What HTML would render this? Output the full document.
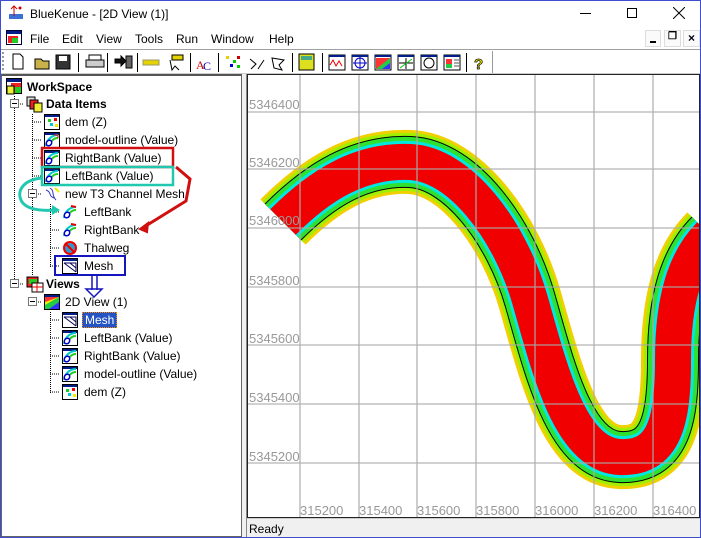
<!DOCTYPE html>
<html><head><style>
*{margin:0;padding:0;box-sizing:border-box}
body{width:701px;height:538px;overflow:hidden;background:#fff;font-family:"Liberation Sans",sans-serif;font-size:12px;position:relative}
.a{position:absolute}
.t{position:absolute;font-size:12px;white-space:nowrap;line-height:14px}
</style></head><body>
<div class="a" style="left:0;top:0;width:701px;height:538px;border:1px solid #3d4fd0"></div>
<div class="a" style="left:8px;top:4px;width:16px;height:16px">
<svg width="16" height="16"><rect x="1" y="10" width="14" height="5" fill="#3a6fd8"/><path d="M6 2v10M3 5l3-3 3 3" stroke="#c00" fill="none"/><circle cx="12" cy="4" r="1.5" fill="#c00"/></svg></div>
<div class="t" style="left:30px;top:7px;font-size:12px">BlueKenue - [2D View (1)]</div>
<div class="a" style="left:580px;top:13px;width:11px;height:1px;background:#000"></div>
<div class="a" style="left:627px;top:8px;width:10px;height:10px;border:1px solid #000"></div>
<svg class="a" style="left:673px;top:7px" width="12" height="12"><path d="M0 0L12 12M12 0L0 12" stroke="#000"/></svg>
<svg class="a" style="left:6px;top:30px" width="16" height="15"><rect x="0.5" y="0.5" width="15" height="14" fill="#fff" stroke="#003"/><rect x="1" y="1" width="14" height="3" fill="#001d8a"/><rect x="2" y="6" width="10" height="7" fill="#e22"/><rect x="6" y="8" width="6" height="5" fill="#2c2"/></svg>
<div class="t" style="left:30px;top:32px">File</div>
<div class="t" style="left:62px;top:32px">Edit</div>
<div class="t" style="left:96px;top:32px">View</div>
<div class="t" style="left:135px;top:32px">Tools</div>
<div class="t" style="left:176px;top:32px">Run</div>
<div class="t" style="left:211px;top:32px">Window</div>
<div class="t" style="left:269px;top:32px">Help</div>
<div class="a" style="left:645px;top:30px;width:16px;height:17px;border:1px solid #ddd;background:#fafafa"></div><div class="a" style="left:650px;top:41px;width:6px;height:2px;background:#000"></div>
<div class="a" style="left:664px;top:30px;width:17px;height:17px;border:1px solid #ddd;background:#fafafa;font-size:10px;text-align:center;font-weight:bold">&#x2750;</div>
<div class="a" style="left:683px;top:30px;width:17px;height:17px;border:1px solid #ddd;background:#fafafa;font-size:12px;text-align:center;font-weight:bold;color:#001">×</div>
<div class="a" style="left:1px;top:49px;width:699px;height:1px;background:#a0a0a0"></div>
<div class="a" style="left:2px;top:52px;width:2px;height:18px;border-left:2px dotted #999"></div>
<svg class="a" style="left:0;top:50px" width="500" height="24">
<g stroke="#000" fill="none">
<path d="M13 4h7l3 3v12h-10z" fill="#fff"/>
<path d="M35 9h6l2 2h6v8h-14z" fill="#c9b24a"/>
<rect x="56" y="5" width="14" height="14" fill="#333"/><rect x="59" y="6" width="8" height="5" fill="#fff" stroke="none"/>
<path d="M86 10h18v7h-18z" fill="#ccc"/><path d="M89 10v-5h12v5"/>
<path d="M115 9h6v-3l5 5-5 5v-3h-6z" fill="#111"/><rect x="126" y="6" width="6" height="12" fill="#666"/>
<rect x="143" y="10" width="16" height="5" fill="#e6d200" stroke="#996"/>
<path d="M172 5h11v5h-11z" fill="#e6d200"/><path d="M170 10l2 10 3-4 4 4" />
</g>
<text x="196" y="19" font-family="Liberation Serif" font-size="12" fill="#c00">A</text><text x="203" y="20" font-family="Liberation Serif" font-size="12" fill="#00c">C</text>
<rect x="226" y="6" width="3" height="3" fill="#e6d200"/><rect x="233" y="10" width="3" height="3" fill="#0c0"/><rect x="237" y="6" width="3" height="3" fill="#c00"/><rect x="230" y="14" width="3" height="3" fill="#00c"/><rect x="237" y="15" width="3" height="3" fill="#0c0"/>
<path d="M250 9l6 5-5 5M258 19l6-9" stroke="#000" fill="none"/>
<path d="M272 8l12 2-5 5 3 5-8-2z" stroke="#000" fill="none"/>
<rect x="299" y="4" width="15" height="16" fill="#dde020" stroke="#000"/><rect x="301" y="6" width="11" height="4" fill="#4a8" />
<g stroke="#000" fill="#fff"><rect x="329" y="5" width="16" height="15"/><rect x="352" y="5" width="16" height="15"/><rect x="375" y="5" width="16" height="15"/><rect x="398" y="5" width="16" height="15"/><rect x="421" y="5" width="16" height="15"/><rect x="444" y="5" width="16" height="15"/></g>
<g fill="#001d8a"><rect x="329" y="5" width="16" height="2"/><rect x="352" y="5" width="16" height="2"/><rect x="375" y="5" width="16" height="2"/><rect x="398" y="5" width="16" height="2"/><rect x="421" y="5" width="16" height="2"/><rect x="444" y="5" width="16" height="2"/></g>
<path d="M330 15l3-5 3 6 3-5 3 5" stroke="#e00" fill="none"/>
<circle cx="360" cy="13" r="5" stroke="#00c" fill="none"/><path d="M353 13h14M360 7v12" stroke="#00c"/>
<rect x="376" y="8" width="14" height="11" fill="#f33"/><path d="M376 19l14-11v11z" fill="#2c4"/><path d="M382 19l8-6v6z" fill="#33f"/>
<path d="M399 13h14M406 8v11" stroke="#000"/><path d="M400 18l12-9" stroke="#0c0"/>
<circle cx="429" cy="13" r="5" stroke="#000" fill="none"/>
<rect x="446" y="9" width="6" height="5" fill="#f33"/><rect x="446" y="14" width="6" height="4" fill="#2c4"/><path d="M454 10h5M454 13h5M454 16h5" stroke="#555"/>
<text x="474" y="19" font-size="15" font-weight="bold" fill="#ee0" stroke="#000" stroke-width="0.7">?</text>
<g fill="#000"><rect x="78" y="3" width="1" height="19"/><rect x="107" y="3" width="1" height="19"/><rect x="137" y="3" width="1" height="19"/><rect x="190" y="3" width="1" height="19"/><rect x="218" y="3" width="1" height="19"/><rect x="292" y="3" width="1" height="19"/><rect x="322" y="3" width="1" height="19"/><rect x="466" y="3" width="1" height="19"/></g>
<rect x="492" y="1" width="1" height="23" fill="#999"/>
</svg>
<div class="a" style="left:1px;top:73px;width:699px;height:1px;background:#ccc"></div>
<div class="a" style="left:1px;top:74px;width:241px;height:463px;border:1px solid #666;border-top:2px solid #555;background:#fff"></div>
<div class="a" style="left:242px;top:74px;width:5px;height:463px;background:#f0f0f0;border-right:1px solid #888"></div>
<svg class="a" style="left:0;top:74px" width="242" height="340">
<g stroke="#000" stroke-dasharray="1,1" fill="none">
<path d="M14.5 22v188"/>
<path d="M14 30h10M14 210h10"/>
<path d="M32.5 40v162"/>
<path d="M32 48h10M32 66h10M32 84h10M32 102h10M32 120h10M32 228h10"/>
<path d="M50.5 130v64M50 138h10M50 156h10M50 174h10M50 192h10"/>
<path d="M50.5 238v82M50 246h10M50 264h10M50 282h10M50 300h10M50 318h10"/>
</g>
<g fill="#fff" stroke="#777"><rect x="10.5" y="25.5" width="8" height="8"/><rect x="28.5" y="115.5" width="8" height="8"/><rect x="10.5" y="205.5" width="8" height="8"/><rect x="28.5" y="223.5" width="8" height="8"/></g>
<g stroke="#000"><path d="M12 29.5h5M30 119.5h5M12 209.5h5M30 227.5h5"/></g>
</svg>
<svg class="a" style="left:6px;top:78px" width="18" height="18"><rect x="0.5" y="0.5" width="15" height="15" fill="#fff" stroke="#000"/><rect x="1" y="1" width="14" height="3" fill="#001d8a"/><rect x="5" y="5" width="10" height="10" fill="#e22"/><rect x="9" y="9" width="6" height="6" fill="#2c2"/><rect x="1" y="8" width="7" height="8" fill="#ee3" stroke="#000"/></svg>
<div class="t" style="left:27px;top:80px;font-weight:bold">WorkSpace</div>
<svg class="a" style="left:26px;top:96px" width="18" height="18"><rect x="1" y="1" width="8" height="9" fill="#ddd" stroke="#000"/><rect x="4" y="4" width="8" height="9" fill="#e22" stroke="#000"/><rect x="8" y="7" width="8" height="9" fill="#ee3" stroke="#000"/></svg>
<div class="t" style="left:46px;top:97px;font-weight:bold">Data Items</div>
<svg class="a" style="left:44px;top:114px" width="16" height="16"><rect x="0.5" y="0.5" width="15" height="15" fill="#fff" stroke="#000"/><rect x="1" y="1" width="14" height="2" fill="#001d8a"/><rect x="4" y="5" width="3" height="3" fill="#2c2"/><rect x="10" y="4" width="3" height="3" fill="#e00"/><rect x="6" y="9" width="3" height="3" fill="#0cc"/><rect x="11" y="10" width="3" height="3" fill="#ee0"/></svg>
<div class="t" style="left:65px;top:115px">dem (Z)</div>
<svg class="a" style="left:44px;top:132px" width="16" height="16"><rect x="0.5" y="0.5" width="15" height="15" fill="#fff" stroke="#000"/><rect x="1" y="1" width="14" height="2" fill="#001d8a"/><path d="M2 14 A12 12 0 0 1 14 3" stroke="#0cc" stroke-width="2" fill="none"/><path d="M6 14A8 8 0 0 1 14 6" stroke="#2c2" stroke-width="2" fill="none"/><path d="M10 3h4v3" stroke="#e00" fill="none"/><ellipse cx="5" cy="11" rx="2.5" ry="3" transform="rotate(40 5 11)" fill="#fff" stroke="#00c" stroke-width="1.5"/></svg>
<div class="t" style="left:65px;top:133px">model-outline (Value)</div>
<svg class="a" style="left:44px;top:150px" width="16" height="16"><rect x="0.5" y="0.5" width="15" height="15" fill="#fff" stroke="#000"/><rect x="1" y="1" width="14" height="2" fill="#001d8a"/><path d="M2 14 A12 12 0 0 1 14 3" stroke="#0cc" stroke-width="2" fill="none"/><path d="M6 14A8 8 0 0 1 14 6" stroke="#2c2" stroke-width="2" fill="none"/><ellipse cx="5" cy="11" rx="2.5" ry="3" transform="rotate(40 5 11)" fill="#fff" stroke="#00c" stroke-width="1.5"/></svg>
<div class="t" style="left:65px;top:151px">RightBank (Value)</div>
<svg class="a" style="left:44px;top:168px" width="16" height="16"><rect x="0.5" y="0.5" width="15" height="15" fill="#fff" stroke="#000"/><rect x="1" y="1" width="14" height="2" fill="#001d8a"/><path d="M2 14 A12 12 0 0 1 14 3" stroke="#0cc" stroke-width="2" fill="none"/><path d="M6 14A8 8 0 0 1 14 6" stroke="#2c2" stroke-width="2" fill="none"/><ellipse cx="5" cy="11" rx="2.5" ry="3" transform="rotate(40 5 11)" fill="#fff" stroke="#00c" stroke-width="1.5"/></svg>
<div class="t" style="left:65px;top:169px">LeftBank (Value)</div>
<svg class="a" style="left:44px;top:186px" width="16" height="16"><path d="M2 4c6 2 2 6 8 8M6 2c5 3 1 7 6 12" stroke="#33c" fill="none"/><path d="M11 2l4 4" stroke="#ee0" stroke-width="2"/></svg>
<div class="t" style="left:65px;top:187px">new T3 Channel Mesh</div>
<svg class="a" style="left:62px;top:204px" width="16" height="16"><path d="M2 14 A12 12 0 0 1 14 3" stroke="#0cc" stroke-width="2" fill="none"/><path d="M6 14A8 8 0 0 1 14 6" stroke="#2c2" stroke-width="2" fill="none"/><path d="M9 2l5 1" stroke="#e00" stroke-width="2"/><ellipse cx="5" cy="11" rx="2.5" ry="3" transform="rotate(40 5 11)" fill="#fff" stroke="#00c" stroke-width="1.5"/></svg>
<div class="t" style="left:84px;top:205px">LeftBank</div>
<svg class="a" style="left:62px;top:222px" width="16" height="16"><path d="M2 14 A12 12 0 0 1 14 3" stroke="#0cc" stroke-width="2" fill="none"/><path d="M6 14A8 8 0 0 1 14 6" stroke="#2c2" stroke-width="2" fill="none"/><path d="M9 2l5 1" stroke="#e00" stroke-width="2"/><ellipse cx="5" cy="11" rx="2.5" ry="3" transform="rotate(40 5 11)" fill="#fff" stroke="#00c" stroke-width="1.5"/></svg>
<div class="t" style="left:84px;top:223px">RightBank</div>
<svg class="a" style="left:62px;top:240px" width="16" height="16"><circle cx="8" cy="8" r="6" stroke="#e00" stroke-width="2" fill="#39c"/><path d="M3 3l10 10" stroke="#e00" stroke-width="2"/></svg>
<div class="t" style="left:84px;top:241px">Thalweg</div>
<svg class="a" style="left:62px;top:258px" width="16" height="16"><rect x="0.5" y="0.5" width="15" height="15" fill="#fff" stroke="#000"/><rect x="1" y="1" width="14" height="2" fill="#001d8a"/><path d="M2 5h12v9M2 5l12 9M8 5l6 5" stroke="#005" fill="none"/></svg>
<div class="t" style="left:84px;top:259px">Mesh</div>
<svg class="a" style="left:26px;top:276px" width="18" height="18"><rect x="1" y="1" width="11" height="10" fill="#e22" stroke="#000"/><rect x="3" y="3" width="8" height="5" fill="#2c2"/><rect x="6" y="7" width="11" height="9" fill="#fff" stroke="#000"/><path d="M6 11h11M11 7v9" stroke="#e00"/></svg>
<div class="t" style="left:46px;top:277px;font-weight:bold">Views</div>
<svg class="a" style="left:44px;top:294px" width="16" height="16"><rect x="0.5" y="0.5" width="15" height="15" fill="#fff" stroke="#000"/><rect x="1" y="1" width="14" height="2" fill="#001d8a"/><rect x="1" y="3" width="14" height="12" fill="#f33"/><path d="M1 15V8l14-5v12z" fill="#ee0"/><path d="M1 15v-4l14-8v12z" fill="#2c4"/><path d="M5 15l10-7v7z" fill="#33f"/></svg>
<div class="t" style="left:65px;top:295px">2D View (1)</div>
<svg class="a" style="left:62px;top:312px" width="16" height="16"><rect x="0.5" y="0.5" width="15" height="15" fill="#fff" stroke="#000"/><rect x="1" y="1" width="14" height="2" fill="#001d8a"/><path d="M2 5h12v9M2 5l12 9M8 5l6 5" stroke="#005" fill="none"/></svg>
<div class="t" style="left:82px;top:312px;background:#2453c4;color:#fff;padding:0 2px;border:1px dotted #f80;height:16px;line-height:14px">Mesh</div>
<svg class="a" style="left:62px;top:330px" width="16" height="16"><rect x="0.5" y="0.5" width="15" height="15" fill="#fff" stroke="#000"/><rect x="1" y="1" width="14" height="2" fill="#001d8a"/><path d="M2 14 A12 12 0 0 1 14 3" stroke="#0cc" stroke-width="2" fill="none"/><path d="M6 14A8 8 0 0 1 14 6" stroke="#2c2" stroke-width="2" fill="none"/><ellipse cx="5" cy="11" rx="2.5" ry="3" transform="rotate(40 5 11)" fill="#fff" stroke="#00c" stroke-width="1.5"/></svg>
<div class="t" style="left:84px;top:331px">LeftBank (Value)</div>
<svg class="a" style="left:62px;top:348px" width="16" height="16"><rect x="0.5" y="0.5" width="15" height="15" fill="#fff" stroke="#000"/><rect x="1" y="1" width="14" height="2" fill="#001d8a"/><path d="M2 14 A12 12 0 0 1 14 3" stroke="#0cc" stroke-width="2" fill="none"/><path d="M6 14A8 8 0 0 1 14 6" stroke="#2c2" stroke-width="2" fill="none"/><ellipse cx="5" cy="11" rx="2.5" ry="3" transform="rotate(40 5 11)" fill="#fff" stroke="#00c" stroke-width="1.5"/></svg>
<div class="t" style="left:84px;top:349px">RightBank (Value)</div>
<svg class="a" style="left:62px;top:366px" width="16" height="16"><rect x="0.5" y="0.5" width="15" height="15" fill="#fff" stroke="#000"/><rect x="1" y="1" width="14" height="2" fill="#001d8a"/><path d="M2 14 A12 12 0 0 1 14 3" stroke="#0cc" stroke-width="2" fill="none"/><path d="M6 14A8 8 0 0 1 14 6" stroke="#2c2" stroke-width="2" fill="none"/><ellipse cx="5" cy="11" rx="2.5" ry="3" transform="rotate(40 5 11)" fill="#fff" stroke="#00c" stroke-width="1.5"/></svg>
<div class="t" style="left:84px;top:367px">model-outline (Value)</div>
<svg class="a" style="left:62px;top:384px" width="16" height="16"><rect x="0.5" y="0.5" width="15" height="15" fill="#fff" stroke="#000"/><rect x="1" y="1" width="14" height="2" fill="#001d8a"/><rect x="4" y="5" width="3" height="3" fill="#2c2"/><rect x="10" y="4" width="3" height="3" fill="#e00"/><rect x="6" y="9" width="3" height="3" fill="#0cc"/><rect x="11" y="10" width="3" height="3" fill="#ee0"/></svg>
<div class="t" style="left:84px;top:385px">dem (Z)</div>
<svg class="a" style="left:0;top:0" width="245" height="320">
<rect x="42" y="148" width="131" height="19" fill="none" stroke="#d01010" stroke-width="2.5"/>
<rect x="42" y="167" width="131" height="18" fill="none" stroke="#20c8b0" stroke-width="2.5"/>
<path d="M176 167l14 12-4 22-42 26" fill="none" stroke="#d01010" stroke-width="3"/><path d="M140 229l8-6 -1 9z" fill="#d01010" stroke="#d01010" stroke-width="2"/>
<path d="M42 178c-20 2-26 14-20 24 6 8 20 9 33 8" fill="none" stroke="#20c8b0" stroke-width="3"/><path d="M60 210l-8-5v10z" fill="#20c8b0"/>
<rect x="55" y="256" width="70" height="19" fill="none" stroke="#1515c0" stroke-width="2"/>
<path d="M92 276v14M97 276v14M86 289l8 8 8-8z" stroke="#1515c0" stroke-width="1.5" fill="#fff"/>
</svg>
<svg class="a" style="left:247px;top:74px" width="453" height="444">
<rect width="453" height="444" fill="#fff"/>
<g transform="translate(-247,-74)" fill="none" stroke-linecap="butt">
<path d="M283 222 C320 185, 360 160, 410 162 C460 164, 510 230, 530 300 C550 370, 570 455, 620 457 C665 459, 673 420, 673 360 C673 300, 685 260, 710 235" stroke="#f0d000" stroke-width="64"/>
<path d="M283 222 C320 185, 360 160, 410 162 C460 164, 510 230, 530 300 C550 370, 570 455, 620 457 C665 459, 673 420, 673 360 C673 300, 685 260, 710 235" stroke="#9ef000" stroke-width="58"/>
<path d="M283 222 C320 185, 360 160, 410 162 C460 164, 510 230, 530 300 C550 370, 570 455, 620 457 C665 459, 673 420, 673 360 C673 300, 685 260, 710 235" stroke="#000" stroke-width="52"/>
<path d="M283 222 C320 185, 360 160, 410 162 C460 164, 510 230, 530 300 C550 370, 570 455, 620 457 C665 459, 673 420, 673 360 C673 300, 685 260, 710 235" stroke="#30e030" stroke-width="50"/>
<path d="M283 222 C320 185, 360 160, 410 162 C460 164, 510 230, 530 300 C550 370, 570 455, 620 457 C665 459, 673 420, 673 360 C673 300, 685 260, 710 235" stroke="#00e8e0" stroke-width="42"/>
<path d="M283 222 C320 185, 360 160, 410 162 C460 164, 510 230, 530 300 C550 370, 570 455, 620 457 C665 459, 673 420, 673 360 C673 300, 685 260, 710 235" stroke="#f00000" stroke-width="36"/>
</g>
<g stroke="#aaa" stroke-width="1.3" opacity="0.9">
<path d="M53 0v444M112 0v444M170 0v444M229 0v444M288 0v444M347 0v444M406 0v444"/>
<path d="M0 38h453M0 95h453M0 154h453M0 213h453M0 271h453M0 330h453M0 389h453"/>
</g>
<g fill="#999" font-size="13" font-family="Liberation Sans">
<text x="2" y="35">5346400</text><text x="2" y="93">5346200</text><text x="2" y="151">5346000</text><text x="2" y="211">5345800</text><text x="2" y="269">5345600</text><text x="2" y="328">5345400</text><text x="2" y="387">5345200</text>
<text x="53" y="441">315200</text><text x="112" y="441">315400</text><text x="170" y="441">315600</text><text x="229" y="441">315800</text><text x="288" y="441">316000</text><text x="347" y="441">316200</text><text x="406" y="441">316400</text>
</g>
<rect x="0.5" y="0.5" width="452" height="443" fill="none" stroke="#222" stroke-width="1"/>
</svg>
<div class="a" style="left:247px;top:518px;width:453px;height:19px;background:#f0f0f0;border-top:1px solid #ccc"></div>
<div class="t" style="left:249px;top:522px">Ready</div>
</body></html>
